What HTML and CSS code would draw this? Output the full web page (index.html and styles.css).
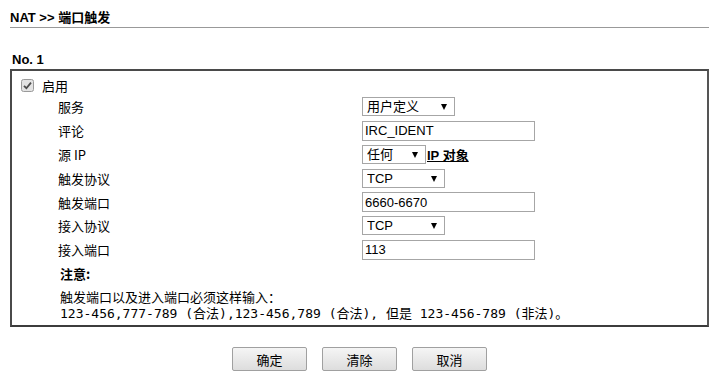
FILE: index.html
```html
<!DOCTYPE html>
<html lang="zh-CN">
<head>
  <meta charset="UTF-8" />
  <title>NAT &gt;&gt; 端口触发</title>
  <link rel="stylesheet" href="styles.css">
</head>
<body>

<div class="page">
  <div class="title">NAT &gt;&gt; 端口触发</div>

  <div class="section-head">No. 1</div>

  <div class="panel">
    <label class="enable">
      <svg class="check" width="13" height="13" viewBox="0 0 13 13">
        <rect x="0.5" y="0.5" width="12" height="12" rx="2" fill="#e3e3e3" stroke="#9a9a9a"/>
        <path d="M3 6.8 L5.4 9.2 L10 3.6" fill="none" stroke="#4d4d4d" stroke-width="1.8"/>
      </svg>
      <span>启用</span>
    </label>

    <div class="form-grid">
      <div class="lbl">服务</div>
      <div class="ctl"><span class="sel-wrap sel-service"><select class="sel"><option>用户定义</option></select></span></div>

      <div class="lbl">评论</div>
      <div class="ctl"><input type="text" class="txt" value="IRC_IDENT"></div>

      <div class="lbl">源 IP</div>
      <div class="ctl">
        <span class="sel-wrap sel-any"><select class="sel"><option>任何</option></select></span><a href="#" class="ip-link">IP 对象</a>
      </div>

      <div class="lbl">触发协议</div>
      <div class="ctl"><span class="sel-wrap sel-proto"><select class="sel"><option>TCP</option></select></span></div>

      <div class="lbl">触发端口</div>
      <div class="ctl"><input type="text" class="txt" value="6660-6670"></div>

      <div class="lbl">接入协议</div>
      <div class="ctl"><span class="sel-wrap sel-proto"><select class="sel"><option>TCP</option></select></span></div>

      <div class="lbl">接入端口</div>
      <div class="ctl"><input type="text" class="txt" value="113"></div>
    </div>

    <div class="note">
      <div class="note-title">注意:</div>
      <div class="note-cjk">触发端口以及进入端口必须这样输入：</div>
      <div>123-456,777-789 (合法),123-456,789 (合法), 但是 123-456-789 (非法)。</div>
    </div>
  </div>

  <div class="button-row">
    <button>确定</button>
    <button>清除</button>
    <button>取消</button>
  </div>
</div>

</body>
</html>
```

FILE: styles.css
```css
body {
  margin: 0;
  background: #fff;
  color: #000;
  font-family: "Liberation Sans", "Noto Sans CJK SC", sans-serif;
  font-size: 13px;
}
.page {
  width: 699px;
  padding: 0 10px;
}
.title {
  font-weight: bold;
  font-size: 13px;
  height: 18px;
  padding-top: 9px;
  border-bottom: 1px solid #999;
  line-height: 18px;
}
.section-head {
  margin-top: 24px;
  font-weight: bold;
  font-size: 13px;
  line-height: 15px;
  padding-left: 2px;
  height: 17px;
}
.panel {
  border: 2px solid #4a4a4a;
  border-right-color: #555;
  border-bottom-color: #3c3c3c;
  padding: 5px 0 0 0;
  height: 258px;
  box-sizing: border-box;
}
.enable {
  display: flex;
  align-items: center;
  height: 19px;
  padding-left: 9px;
}
.check {
  margin-right: 8px;
}
.form-grid {
  display: grid;
  grid-template-columns: 304px 1fr;
  grid-auto-rows: 23.8px;
  padding-left: 46px;
}
.lbl {
  display: flex;
  align-items: center;
  font-family: "Noto Sans CJK SC", sans-serif;
  font-size: 13px;
}
.ctl {
  display: flex;
  align-items: center;
}
.sel-wrap {
  position: relative;
  display: inline-block;
  height: 19px;
}
.sel-wrap::after {
  content: "";
  position: absolute;
  right: 8px;
  top: 7px;
  border-left: 3.5px solid transparent;
  border-right: 3.5px solid transparent;
  border-top: 6px solid #000;
  pointer-events: none;
}
.sel {
  appearance: none;
  -webkit-appearance: none;
  width: 100%;
  height: 19px;
  box-sizing: border-box;
  font-family: "Liberation Sans", "Noto Sans CJK SC", sans-serif;
  font-size: 13px;
  border: 1px solid #a6a6a6;
  background: #fff;
  padding: 0 0 0 4px;
  margin: 0;
  color: #000;
  line-height: 17px;
}
.sel-service { width: 93px; }
.sel-any { width: 64px; }
.sel-proto { width: 83px; }
.txt {
  width: 173px;
  height: 20px;
  box-sizing: border-box;
  border: 1px solid #a6a6a6;
  padding: 0 2px;
  margin: 0;
  font-family: "Liberation Sans", sans-serif;
  font-size: 13px;
  color: #000;
}
.ip-link {
  color: #000;
  font-weight: bold;
  font-size: 13px;
  margin-left: 1px;
}
.note {
  padding-left: 48px;
  margin-top: 3px;
  font-family: "DejaVu Sans Mono", "Noto Sans CJK SC", monospace;
  font-size: 13px;
  line-height: 17px;
}
.note-title {
  font-weight: bold;
  margin-bottom: 6px;
  font-family: "Noto Sans CJK SC", sans-serif;
}
.note-cjk {
  font-family: "Noto Sans CJK SC", sans-serif;
}
.button-row {
  display: flex;
  justify-content: center;
  gap: 15px;
  margin-top: 20px;
}
.button-row button {
  width: 75px;
  height: 24px;
  border: 1px solid #a0a0a0;
  border-radius: 2px;
  background: linear-gradient(#f5f5f5, #dddddd);
  font-family: "Noto Sans CJK SC", sans-serif;
  font-size: 13px;
  color: #000;
  padding: 0;
}
```
